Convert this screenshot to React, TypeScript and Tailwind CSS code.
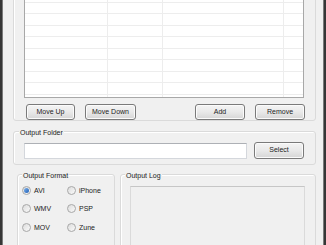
import React from "react";

const rowHeights = [3, 11, 12, 11, 12, 11, 12, 11, 12, 2];

function Btn({ label, w, h = 16 }: { label: string; w: string; h?: number }) {
  return (
    <div
      className={`${w} ${h === 17 ? "h-[17px]" : "h-[16px]"} flex items-center justify-center rounded-[3px] border border-[#7a7a7a] bg-gradient-to-b from-[#f4f4f4] via-[#e9e9e9] to-[#d6d6d6] shadow-[inset_0_0_0_1px_#fbfbfb] text-[7px] text-[#222222]`}
    >
      {label}
    </div>
  );
}

function Radio({ label, checked }: { label: string; checked?: boolean }) {
  return (
    <div className="flex items-center gap-[3px] h-[10px]">
      <div className="w-[9px] h-[9px] rounded-full border border-[#a8a8a8] bg-gradient-to-br from-[#dcdcdc] to-[#fafafa] flex items-center justify-center">
        {checked && <div className="w-[5px] h-[5px] rounded-full bg-gradient-to-br from-[#7fb2ea] to-[#1d5fb6]" />}
      </div>
      <span className="text-[7px] text-[#222222] leading-none">{label}</span>
    </div>
  );
}

export default function App() {
  return (
    <div
      className="w-[326px] h-[245px] overflow-hidden flex bg-[#f0f0f0]"
      style={{ fontFamily: '"Liberation Sans", Arial, sans-serif' }}
    >
      <div className="w-[3px] h-full flex">
        <div className="w-[2px] h-full bg-[#363636]" />
        <div className="w-[1px] h-full bg-[#7a7a7a]" />
      </div>
      <div className="w-[320px] h-full pl-[10px] flex flex-col">
        {/* Group 1: list */}
        <div className="mt-[-10px] w-[303px] h-[134px] rounded-[3px] border border-[#dadada] shadow-[inset_1px_1px_0_#ffffff] px-[10px] flex flex-col">
          <div className="mt-[8px] w-[280px] h-[99px] border border-[#a8a8a8] bg-white flex flex-col">
            {rowHeights.map((h, i) => (
              <div
                key={i}
                className={`flex ${i < rowHeights.length - 1 ? "border-b border-[#ededed]" : ""}`}
                style={{ height: h }}
              >
                <div className="w-[83px] h-full border-r border-[#ededed]" />
                <div className="w-[55px] h-full border-r border-[#ededed]" />
                <div className="w-[121px] h-full border-r border-[#ededed]" />
                <div className="flex-1 h-full" />
              </div>
            ))}
          </div>
          <div className="mt-[6px] pl-[2px] flex justify-between">
            <div className="flex gap-[10px]">
              <Btn label="Move Up" w="w-[49px]" />
              <Btn label="Move Down" w="w-[51px]" />
            </div>
            <div className="flex gap-[10px]">
              <Btn label="Add" w="w-[50px]" />
              <Btn label="Remove" w="w-[50px]" />
            </div>
          </div>
        </div>

        {/* Output Folder */}
        <div className="relative mt-[10px] w-[303px] h-[34px] rounded-[3px] border border-[#dadada] shadow-[inset_1px_1px_0_#ffffff] pl-[10px] pr-[11px] pt-[10px] flex items-end gap-[7px]">
          <span className="absolute left-[5px] top-[-4px] bg-[#f0f0f0] px-[1px] text-[7px] leading-[9px] text-[#222222]">
            Output Folder
          </span>
          <div className="w-[223px] h-[16px] mb-[5px] bg-white border border-[#d4d7dc] border-t-[#adb0b5]" />
          <div className="mb-[5px]">
            <Btn label="Select" w="w-[50px]" h={17} />
          </div>
        </div>

        {/* Bottom row */}
        <div className="mt-[9px] ml-[4px] flex gap-[5px]">
          <div className="relative w-[98px] h-[90px] rounded-[3px] border border-[#dadada] shadow-[inset_1px_1px_0_#ffffff] pl-[4px] pt-[10px]">
            <span className="absolute left-[4px] top-[-4px] bg-[#f0f0f0] px-[1px] text-[7px] leading-[9px] text-[#222222]">
              Output Format
            </span>
            <div className="grid grid-cols-[45px_45px] gap-y-[8.5px]">
              <Radio label="AVI" checked />
              <Radio label="iPhone" />
              <Radio label="WMV" />
              <Radio label="PSP" />
              <Radio label="MOV" />
              <Radio label="Zune" />
            </div>
          </div>
          <div className="relative w-[196px] h-[90px] rounded-[3px] border border-[#dadada] shadow-[inset_1px_1px_0_#ffffff] pl-[9px] pr-[10px] pt-[11px]">
            <span className="absolute left-[4px] top-[-4px] bg-[#f0f0f0] px-[1px] text-[7px] leading-[9px] text-[#222222]">
              Output Log
            </span>
            <div className="w-[175px] h-[80px] border border-[#dadada] border-t-[#c6c6c6] bg-[#f0f0f0]" />
          </div>
        </div>
      </div>
      <div className="w-[3px] h-full flex">
        <div className="w-[1px] h-full bg-[#7a7a7a]" />
        <div className="w-[2px] h-full bg-[#363636]" />
      </div>
    </div>
  );
}
